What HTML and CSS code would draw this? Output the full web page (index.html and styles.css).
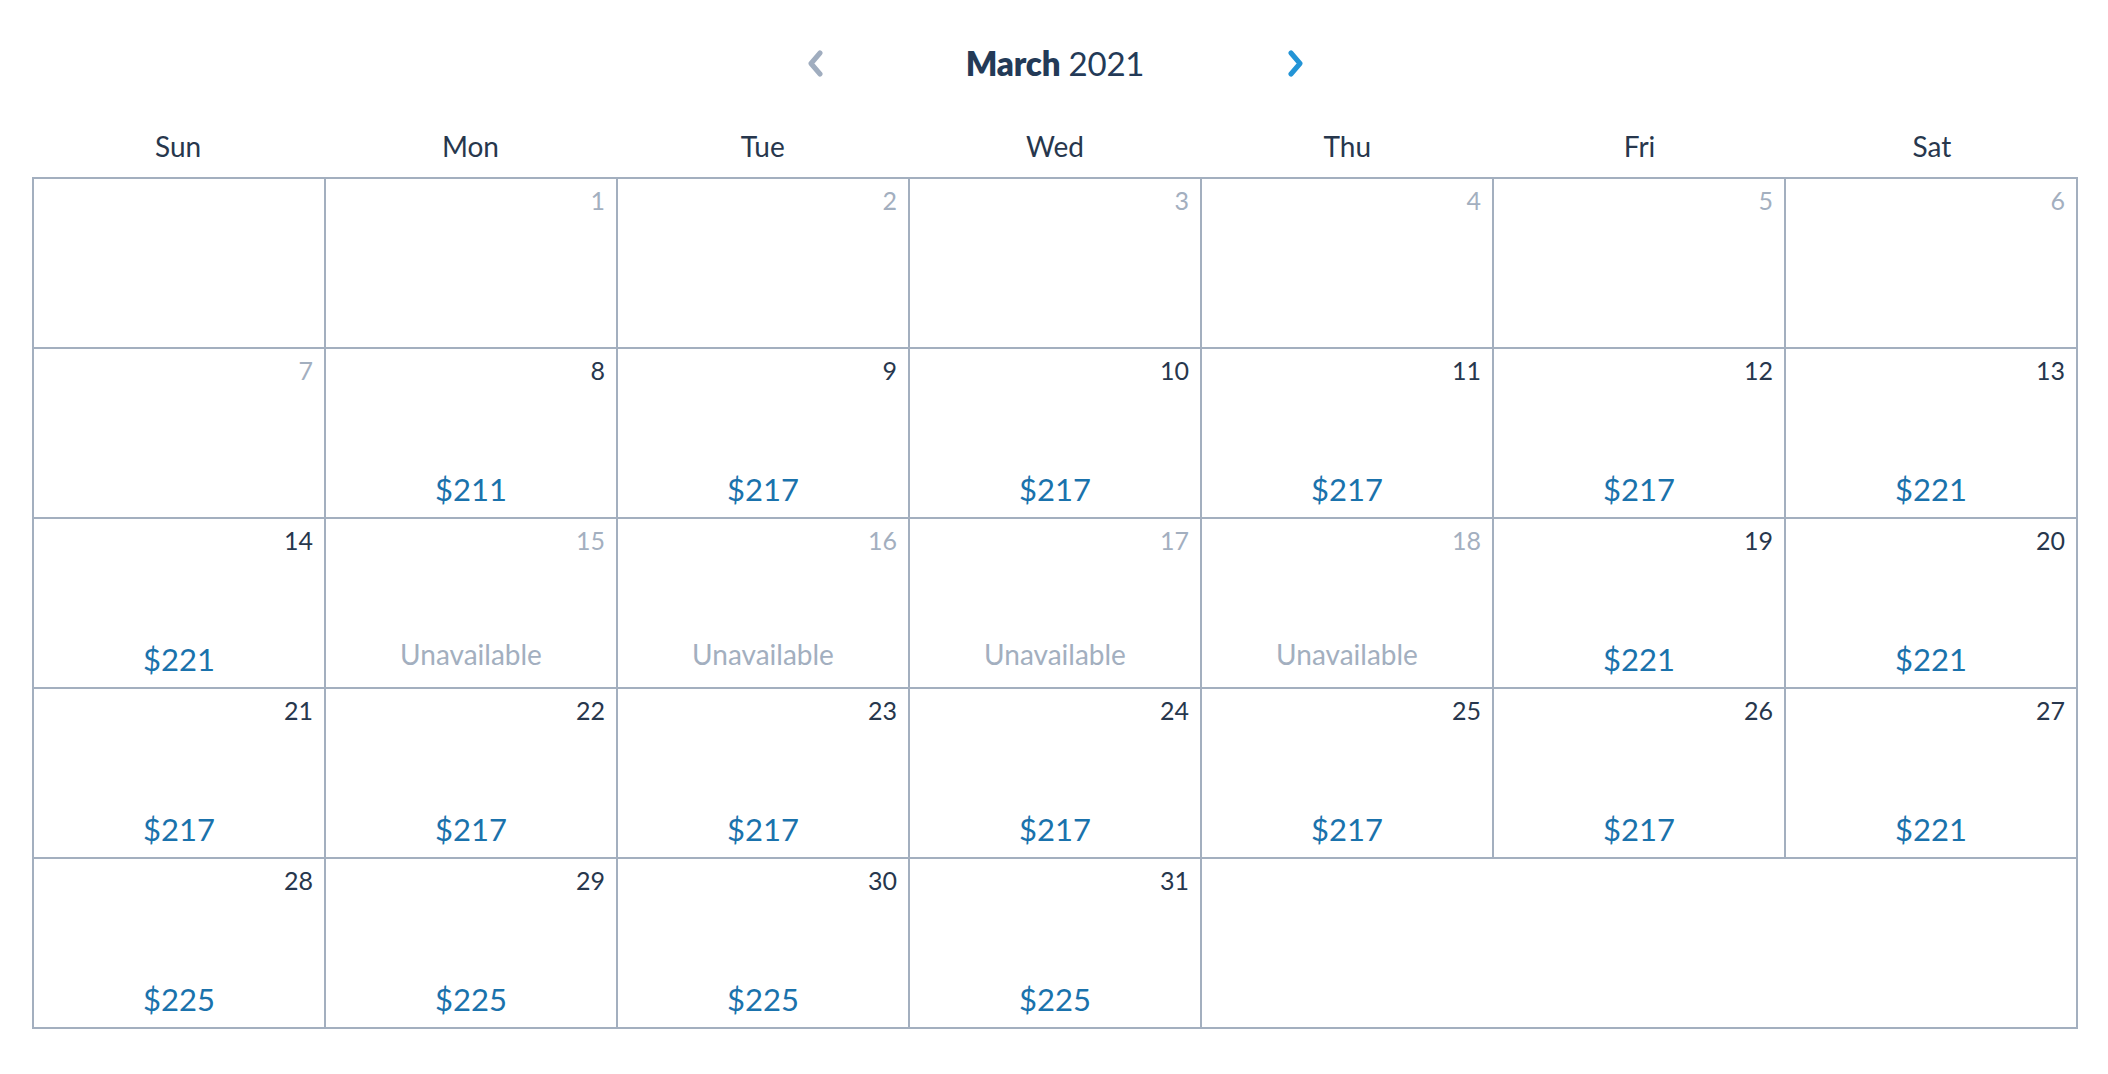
FILE: index.html
```html
<!DOCTYPE html>
<html>
<head>
<meta charset="utf-8">
<link rel="stylesheet" href="styles.css">
</head>
<body>
<div class="page">
  <div class="header">
    <svg class="arrow" width="18" height="27" viewBox="0 0 18 27"><polyline points="14,3 5,13.5 14,24" fill="none" stroke="#a0adbf" stroke-width="5" stroke-linecap="round" stroke-linejoin="round"/></svg>
    <div class="title"><b>March</b> 2021</div>
    <svg class="arrow" width="18" height="27" viewBox="0 0 18 27"><polyline points="4,3 13,13.5 4,24" fill="none" stroke="#2394d6" stroke-width="5" stroke-linecap="round" stroke-linejoin="round"/></svg>
  </div>
  <div class="weekdays">
    <div>Sun</div><div>Mon</div><div>Tue</div><div>Wed</div><div>Thu</div><div>Fri</div><div>Sat</div>
  </div>
  <div class="grid">
    <div class="cell"></div>
    <div class="cell"><span class="num off">1</span></div>
    <div class="cell"><span class="num off">2</span></div>
    <div class="cell"><span class="num off">3</span></div>
    <div class="cell"><span class="num off">4</span></div>
    <div class="cell"><span class="num off">5</span></div>
    <div class="cell"><span class="num off">6</span></div>

    <div class="cell"><span class="num off">7</span></div>
    <div class="cell"><span class="num">8</span><span class="price">$211</span></div>
    <div class="cell"><span class="num">9</span><span class="price">$217</span></div>
    <div class="cell"><span class="num">10</span><span class="price">$217</span></div>
    <div class="cell"><span class="num">11</span><span class="price">$217</span></div>
    <div class="cell"><span class="num">12</span><span class="price">$217</span></div>
    <div class="cell"><span class="num">13</span><span class="price">$221</span></div>

    <div class="cell"><span class="num">14</span><span class="price">$221</span></div>
    <div class="cell"><span class="num off">15</span><span class="na">Unavailable</span></div>
    <div class="cell"><span class="num off">16</span><span class="na">Unavailable</span></div>
    <div class="cell"><span class="num off">17</span><span class="na">Unavailable</span></div>
    <div class="cell"><span class="num off">18</span><span class="na">Unavailable</span></div>
    <div class="cell"><span class="num">19</span><span class="price">$221</span></div>
    <div class="cell"><span class="num">20</span><span class="price">$221</span></div>

    <div class="cell"><span class="num">21</span><span class="price">$217</span></div>
    <div class="cell"><span class="num">22</span><span class="price">$217</span></div>
    <div class="cell"><span class="num">23</span><span class="price">$217</span></div>
    <div class="cell"><span class="num">24</span><span class="price">$217</span></div>
    <div class="cell"><span class="num">25</span><span class="price">$217</span></div>
    <div class="cell"><span class="num">26</span><span class="price">$217</span></div>
    <div class="cell"><span class="num">27</span><span class="price">$221</span></div>

    <div class="cell"><span class="num">28</span><span class="price">$225</span></div>
    <div class="cell"><span class="num">29</span><span class="price">$225</span></div>
    <div class="cell"><span class="num">30</span><span class="price">$225</span></div>
    <div class="cell"><span class="num">31</span><span class="price">$225</span></div>
    <div class="cell span3"></div>
  </div>
</div>
</body>
</html>
```

FILE: styles.css
```css
html, body {
  margin: 0;
  padding: 0;
  background: #ffffff;
}
body {
  font-family: Lato, "Noto Sans", sans-serif;
  color: #253a55;
}
.page {
  width: 2046px;
  margin-left: 32px;
}
.header {
  display: flex;
  align-items: center;
  justify-content: center;
  height: 38px;
  margin-top: 44px;
}
.arrow {
  display: block;
}
.title {
  width: 463px;
  text-align: center;
  font-size: 33px;
  letter-spacing: -0.2px;
  color: #233a57;
}
.title b {
  font-weight: 800;
}
.weekdays {
  display: grid;
  grid-template-columns: repeat(7, 1fr);
  height: 64px;
  margin-top: 47px;
  align-items: start;
}
.weekdays div {
  text-align: center;
  font-size: 28px;
  color: #27374d;
}
.grid {
  display: grid;
  grid-template-columns: repeat(7, 1fr);
  grid-auto-rows: 170px;
  border-top: 2px solid #a3afbf;
  border-left: 2px solid #a3afbf;
  margin-top: -16px;
}
.cell {
  border-right: 2px solid #a3afbf;
  border-bottom: 2px solid #a3afbf;
  display: flex;
  flex-direction: column;
  align-items: stretch;
  padding: 4px 11px 0 11px;
}
.span3 {
  grid-column: span 3;
}
.num {
  text-align: right;
  font-size: 25px;
  line-height: 34px;
  color: #27374d;
}
.num.off {
  color: #a3afbf;
}
.price {
  margin-top: auto;
  text-align: center;
  font-size: 31px;
  line-height: 36px;
  margin-bottom: 10px;
  color: #1a72ac;
}
.na {
  margin-top: auto;
  text-align: center;
  font-size: 28px;
  line-height: 32px;
  margin-bottom: 17px;
  color: #a3afbf;
}
```
